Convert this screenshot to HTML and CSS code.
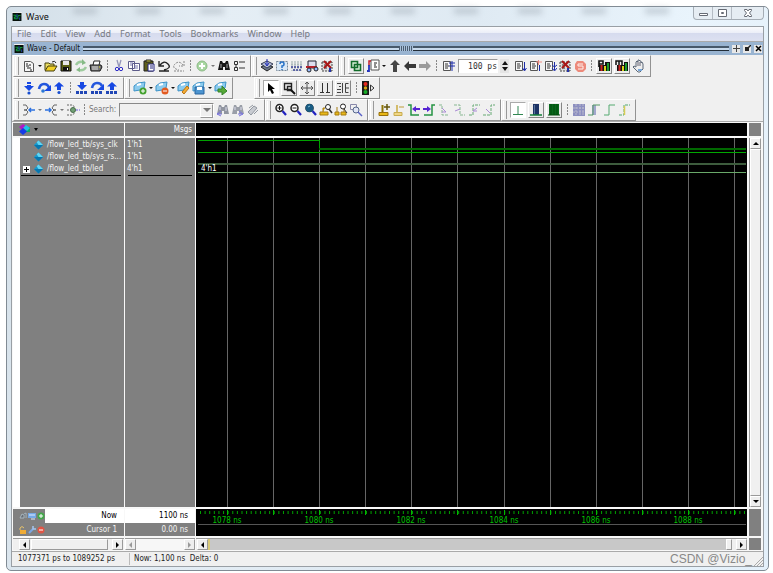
FILE: index.html
```html
<!DOCTYPE html>
<html lang="en">
<head>
<meta charset="utf-8">
<title>Wave</title>
<link rel="stylesheet" href="styles.css">
</head>
<body>
<svg class="defs" aria-hidden="true">
  <defs>
    <g id="page" fill="none" stroke="#555"><path d="M2.5 2.5h7v9h-7z" fill="#f6f6f6"/><path d="M4 5h3M4 7h4M4 9h3" stroke="#333"/></g>
    <g id="flag"><path d="M1 5l4-3 7-1-1 6-4 2-6 1z" fill="#8ccbee" stroke="#3d93c8"/><path d="M4 4l4-1" stroke="#fff" stroke-width="2"/></g>
    <g id="lens"><circle cx="5.5" cy="5" r="3.5" fill="#fff" stroke="#222" stroke-width="1.5"/><path d="M8.5 8l3.5 4" stroke="#2222c0" stroke-width="2.2"/></g>
    <g id="bars"><path d="M2 3h11v9H2z" fill="#111"/><path d="M4.500 6v6" stroke="#c22" stroke-width="2"/><path d="M8 7v5" stroke="#ddd21a" stroke-width="2"/><path d="M11 4v8" stroke="#1b9a2e" stroke-width="2"/></g>
    <g id="binoc"><path d="M3 2h2l1 2h2l1-2h2l2 9H8V8H6v3H1z" fill="currentColor"/></g>
    <symbol id="wave" viewBox="0 0 10 9"><path d="M0 0h10v9H0z" fill="#061009"/><path d="M1 2.5h3v2H2v2h3M6 7V3h3" fill="none" stroke="#12b84c"/><path d="M5 1v5M8 5v3" stroke="#2940b5"/></symbol>
    <symbol id="new" viewBox="0 0 14 14"><path d="M2.500 2.500h6l3 2v8h-9z" fill="#f6f6f6" stroke="#555"/><path d="M4 5h2M4 7h3M5 9h4M7 6h2M8 11h2" stroke="#222"/></symbol>
    <symbol id="open" viewBox="0 0 14 14"><path d="M1 11V4h4l1 1h4v2" fill="#e9dc62" stroke="#444011"/><path d="M1 12l3-5h9l-3 5z" fill="#f0cf25" stroke="#443e10"/><path d="M8 3q3-2 4 1" fill="none" stroke="#222"/></symbol>
    <symbol id="save" viewBox="0 0 14 14"><path d="M2 2h10v10H2z" fill="#5c6015" stroke="#111"/><path d="M4 2h6v4H4z" fill="#e8e8e8"/><path d="M4 8h6v4H4z" fill="#111"/><path d="M8 9h1v2H8z" fill="#fff"/></symbol>
    <symbol id="refresh" viewBox="0 0 14 14"><path d="M2 6q2-4 7-3M12 8q-2 4-7 3" fill="none" stroke="#9ecb9e" stroke-width="2.4"/><path d="M8 0l4 4-4 2zM6 8l-4 3 4 2z" fill="#86ba86"/></symbol>
    <symbol id="print" viewBox="0 0 14 14"><path d="M4 6l1-4h6l-1 4" fill="#fff" stroke="#222"/><path d="M1 6h11l1 2-2 4H2z" fill="#777" stroke="#181818"/><path d="M3 8h6M3 10h6" stroke="#ddd"/><path d="M10 8h1" stroke="#dddb20"/></symbol>
    <symbol id="cut" viewBox="0 0 14 14"><path d="M5 1l2 7M9 1L7 8" stroke="#9496b9" stroke-width="1.3"/><circle cx="5" cy="10" r="1.7" fill="none" stroke="#302ec7"/><circle cx="9" cy="10" r="1.7" fill="none" stroke="#302ec7"/></symbol>
    <symbol id="copy" viewBox="0 0 14 14"><path d="M1.5 2.5h6v7h-6zM5.5 4.5h7v7h-7z" fill="#fff" stroke="#5d5c8a"/><path d="M3 4h3M3 6h2M7 7h4M7 9h4" stroke="#77a"/></symbol>
    <symbol id="paste" viewBox="0 0 14 14"><path d="M2 2h9v10H2z" fill="#60601a" stroke="#222"/><path d="M4 1h5v2H4z" fill="#d6d044" stroke="#222"/><path d="M6 5h6v7H6z" fill="#fff" stroke="#22227c"/><path d="M8 7h3M8 9h3" stroke="#22227c"/></symbol>
    <symbol id="undo" viewBox="0 0 14 14"><path d="M2 2v5h5M3 6q4-5 8-1t-4 6M2 12h10" fill="none" stroke="#222" stroke-width="1.3"/></symbol>
    <symbol id="redo" viewBox="0 0 14 14"><path d="M12 2v5H7M11 6Q7 1 3 5t4 6M2 12h10" fill="none" stroke="#888" stroke-dasharray="2 1"/></symbol>
    <symbol id="add" viewBox="0 0 14 14"><circle cx="7" cy="7" r="5" fill="#a8d7a1" stroke="#8cba86"/><path d="M7 4v6M4 7h6" stroke="#fff" stroke-width="2"/></symbol>
    <symbol id="find" viewBox="0 0 14 14"><g color="#171717"><use href="#binoc"/></g><path d="M4 5v4M10 5v4" stroke="#aaa"/></symbol>
    <symbol id="find2" viewBox="0 0 14 14"><g color="#9095a0"><use href="#binoc"/></g><path d="M4 4v3M10 4v4" stroke="#dde"/><path d="M5 8l-4 3 4 2M1 11h5" fill="none" stroke="#7b75de"/></symbol>
    <symbol id="find3" viewBox="0 0 14 14"><g color="#9a9fa8"><use href="#binoc"/></g><path d="M4 4v3M10 4v3" stroke="#dde"/><path d="M8 8l4 3-4 2M12 11H7" fill="none" stroke="#7b75de"/></symbol>
    <symbol id="clip" viewBox="0 0 14 14"><path d="M2 9l6-6 3 2-6 7zM3 5l4-3M8 11l4-4" fill="#c8cbd1" stroke="#9197a0"/></symbol>
    <symbol id="tree" viewBox="0 0 14 14"><path d="M2.5 2.5h3v3h-3zM2.5 8.500h3v3h-3zM7 3h6M7 9h6M4 6v2" fill="none" stroke="#333"/></symbol>
    <symbol id="stack" viewBox="0 0 14 14"><path d="M1 8l6-3 6 3-6 4z" fill="#6e7888" stroke="#222"/><path d="M1 5l6-3 6 3-6 4z" fill="#bcc4d8" stroke="#333b55"/><path d="M7 0v6M5 4l2 3 2-3" stroke="#1d28b3" fill="none"/></symbol>
    <symbol id="help" viewBox="0 0 14 14"><path d="M1.500 2.500h11v9h-11z" fill="#d9e8f6" stroke="#789" stroke-dasharray="2 1"/><path d="M5 5q0-2 2-2t2 2-2 2v2M7 10v1" fill="none" stroke="#2873c7" stroke-width="1.5"/></symbol>
    <symbol id="gridi" viewBox="0 0 14 14"><path d="M2 2v10M5 2v10M8 2v10M11 2v10M1 5h12" stroke="#9aa" stroke-dasharray="2 1"/><path d="M1 8h12M3 11h9" stroke="#333d91" stroke-dasharray="2 1" stroke-width="1.500"/></symbol>
    <symbol id="car" viewBox="0 0 14 14"><path d="M3 2h8v7H3z" fill="#dde" stroke="#223"/><path d="M1 8h11" stroke="#b4202b" stroke-width="2"/><circle cx="4" cy="11" r="2" fill="#9bf" stroke="#222"/><circle cx="11" cy="10" r="2" fill="#9bf" stroke="#222"/></symbol>
    <symbol id="stopx" viewBox="0 0 14 14"><path d="M2 3h10v9H2z" fill="#ddd" stroke="#444" stroke-dasharray="2 1"/><path d="M4 6h3M4 9h3" stroke="#333"/><path d="M4 2l7 7M11 2L4 9" stroke="#a91616" stroke-width="2"/><path d="M10 9v4" stroke="#2634a9" stroke-width="2"/></symbol>
    <symbol id="restart" viewBox="0 0 14 14"><path d="M2.500 2.500h6v6h-6zM5.500 5.500h6v6h-6z" fill="#d8f0d8" stroke="#126c2a" stroke-width="1.6"/></symbol>
    <symbol id="context" viewBox="0 0 14 14"><path d="M5 1h8v10H5z" fill="#fff" stroke="#555"/><path d="M8 4h3M8 6h2M8 8h3" stroke="#222"/><path d="M5 2H3v5" fill="none" stroke="#c3202c" stroke-width="1.5"/><path d="M1 12h2V6" fill="none" stroke="#2434bd" stroke-width="1.8"/></symbol>
    <symbol id="up" viewBox="0 0 14 14"><path d="M7 1l5 5H9v7H5V6H2z" fill="#454545"/></symbol>
    <symbol id="left" viewBox="0 0 14 14"><path d="M1 7l5-5v3h7v4H6v3z" fill="#383838"/></symbol>
    <symbol id="right" viewBox="0 0 14 14"><path d="M13 7L8 2v3H1v4h7v3z" fill="#9a9a9a"/></symbol>
    <symbol id="runlen" viewBox="0 0 14 14"><use href="#page"/><path d="M11 2v10M8 4h6M8 7h6" stroke="#1e2fa9"/></symbol>
    <symbol id="run" viewBox="0 0 14 14"><use href="#page"/><path d="M11.500 3v8M9.500 9l2 3 2-3" fill="none" stroke="#1e2fa9"/></symbol>
    <symbol id="runc" viewBox="0 0 14 14"><use href="#page"/><path d="M11.500 6v6" stroke="#1e2fa9"/><path d="M10.500 1v5M8 3h6" stroke="#ee8c83"/></symbol>
    <symbol id="runall" viewBox="0 0 14 14"><use href="#page"/><path d="M11.500 3v8M9 6l2.500 2L14 6M9 9l2.500 3L14 9" fill="none" stroke="#1e2fa9"/></symbol>
    <symbol id="break" viewBox="0 0 14 14"><path d="M4 2h6l3 3v5l-3 3H5l-3-3V5z" fill="#ed8a7b"/><path d="M10 5H5v2h5v3H5" fill="none" stroke="#fff0ed"/></symbol>
    <symbol id="perf" viewBox="0 0 14 14"><use href="#bars"/><path d="M1 1h7v5H1z" fill="#eee"/><path d="M2 8V2h4v3H2" fill="none" stroke="#111" stroke-width="1.600"/></symbol>
    <symbol id="mem" viewBox="0 0 14 14"><use href="#bars"/><path d="M0 1h9v5H0z" fill="#eee"/><path d="M1 6V2h6v4M4 2v4" fill="none" stroke="#111" stroke-width="1.500"/></symbol>
    <symbol id="hand" viewBox="0 0 14 14"><path d="M4 8V3l1-1 1 1V1h1l1 1h1v2l1-1 1 2v5l-3 3H6L1 8l1-1z" fill="#eee" stroke="#5c6878"/><path d="M6 3v4M8 3v4" stroke="#667"/><path d="M6 11h4" stroke="#78a8db" stroke-width="2"/></symbol>
    <symbol id="down1" viewBox="0 0 14 14"><path d="M5 1h4v2H5zM5 4h4v1h3l-5 5-5-5h3z" fill="#1748e2"/><circle cx="7" cy="12" r="1.600" fill="#174fd0"/></symbol>
    <symbol id="over" viewBox="0 0 14 14"><path d="M2 8q1-5 5-5 4 0 5 4" fill="none" stroke="#2457dd" stroke-width="2.600"/><path d="M14 4v6H7z" fill="#1748e2"/><circle cx="6" cy="10" r="1.800" fill="#2b78d5"/></symbol>
    <symbol id="up1" viewBox="0 0 14 14"><path d="M7 1l5 4.500H9V9H5V5.500H2z" fill="#1748e2"/><circle cx="7" cy="11.500" r="1.600" fill="#174fd0"/></symbol>
    <symbol id="down2" viewBox="0 0 14 14"><path d="M5 1h4v3h3L7 9 2 4h3z" fill="#1748e2"/><path d="M1 11.500h12" stroke="#2046b5" stroke-width="3" stroke-dasharray="3 1"/></symbol>
    <symbol id="over2" viewBox="0 0 14 14"><path d="M2 7q1-5 5-5 4 0 5 3" fill="none" stroke="#2457dd" stroke-width="2.600"/><path d="M14 3v6H7z" fill="#1748e2"/><path d="M1 11.500h12" stroke="#2046b5" stroke-width="3" stroke-dasharray="3 1"/></symbol>
    <symbol id="up2" viewBox="0 0 14 14"><path d="M7 1l5 4.500H9V9H5V5.500H2z" fill="#1748e2"/><path d="M1 11.500h12" stroke="#2046b5" stroke-width="3" stroke-dasharray="3 1"/></symbol>
    <symbol id="flagadd" viewBox="0 0 14 14"><use href="#flag"/><circle cx="10" cy="10" r="3.500" fill="#43a12e"/><path d="M10 8v4M8 10h4" stroke="#fff"/></symbol>
    <symbol id="flagdel" viewBox="0 0 14 14"><use href="#flag"/><circle cx="10" cy="10" r="3.500" fill="#e35a20"/><path d="M8 10h4" stroke="#fff"/></symbol>
    <symbol id="flagedit" viewBox="0 0 14 14"><use href="#flag"/><path d="M5 11l5-6 2 2-5 6z" fill="#f4ad34" stroke="#ba7414"/></symbol>
    <symbol id="flagsave" viewBox="0 0 14 14"><use href="#flag"/><path d="M3 6h9v7H3z" fill="#4c94d0" stroke="#28659e"/><path d="M5 6h5v3H5z" fill="#fff"/></symbol>
    <symbol id="flaggo" viewBox="0 0 14 14"><use href="#flag"/><path d="M4 8h4V5l5 5-5 4v-3H4z" fill="#57a938" stroke="#34822a"/></symbol>
    <symbol id="pointer" viewBox="0 0 14 14"><path d="M4 2l7 6H8l2 4-2 1-2-4-2 2z" fill="#000"/></symbol>
    <symbol id="zoombox" viewBox="0 0 14 14"><path d="M2.500 2.500h7v6h-7zM5.500 5.500h4v4h-4z" fill="none" stroke="#222" stroke-width="1.400"/><path d="M9 9l4 4" stroke="#111" stroke-width="2"/></symbol>
    <symbol id="pan" viewBox="0 0 14 14"><path d="M7 1v12M1 7h12M5 3l2-2 2 2M5 11l2 2 2-2M3 5L1 7l2 2M11 5l2 2-2 2" fill="none" stroke="#555"/></symbol>
    <symbol id="two" viewBox="0 0 14 14"><path d="M4.500 2v9M9.500 2v9M2 11.500h4M8 11.500h4" stroke="#333"/></symbol>
    <symbol id="edit" viewBox="0 0 14 14"><path d="M1 2.500h4M3 5.500h2M1 8.500h4M1 11.500h4M6.500 2v10M12.500 2.500h-3v9h3M9 7h4" fill="none" stroke="#444"/></symbol>
    <symbol id="light" viewBox="0 0 14 14"><path d="M1 0h7v14H1z" fill="#191919"/><circle cx="4.500" cy="3" r="2" fill="#e52a1e"/><circle cx="4.500" cy="7" r="1.700" fill="#d7a616"/><circle cx="4.500" cy="11" r="2" fill="#16ab26"/><path d="M9.500 4l3.500 3-3.500 3z" fill="none" stroke="#333"/></symbol>
    <symbol id="br1" viewBox="0 0 14 14"><path d="M1 2h3l2 3-2 2H2h2l2 2-2 3H1" fill="none" stroke="#666"/><path d="M13 7H7M9 5L7 7l2 2" fill="none" stroke="#2e72df" stroke-width="1.500"/></symbol>
    <symbol id="br2" viewBox="0 0 14 14"><path d="M13 2h-3L8 5l2 2h2-2L8 9l2 3h3" fill="none" stroke="#666"/><path d="M1 7h6M5 5l2 2-2 2" fill="none" stroke="#2e72df" stroke-width="1.500"/></symbol>
    <symbol id="br3" viewBox="0 0 14 14"><path d="M1 2h5l3 2M1 12h5l3-2M1 7h3" fill="none" stroke="#666" stroke-dasharray="2 1"/><circle cx="7" cy="7" r="2.500" fill="#71a175" stroke="#486b4a"/><path d="M10 7h4" stroke="#6a58df" stroke-dasharray="2 1"/></symbol>
    <symbol id="zin" viewBox="0 0 14 14"><use href="#lens"/><path d="M5.500 3v4M3.500 5h4" stroke="#111"/></symbol>
    <symbol id="zout" viewBox="0 0 14 14"><use href="#lens"/><path d="M3.500 5h4" stroke="#111"/></symbol>
    <symbol id="zfull" viewBox="0 0 14 14"><use href="#lens"/><circle cx="5.500" cy="5" r="4" fill="#185b83"/><path d="M4 4l2-1" stroke="#80c0da"/></symbol>
    <symbol id="zcur" viewBox="0 0 14 14"><path d="M1 9h8v3H1zM4 9V5h2" fill="#e8b818" stroke="#a57a10"/><circle cx="9" cy="4" r="2.500" fill="#fff" stroke="#222"/><path d="M10 6l3 4" stroke="#333" stroke-width="1.500"/></symbol>
    <symbol id="zcur2" viewBox="0 0 14 14"><path d="M1 9h4v3H1zM7 9h5v3H7zM3 9V4M10 9V5" fill="#e8b818" stroke="#a57a10"/><circle cx="9" cy="3.500" r="2.500" fill="#fff" stroke="#222"/><path d="M10 6l3 4" stroke="#333"/></symbol>
    <symbol id="zlast" viewBox="0 0 14 14"><path d="M1.500 1.500h6v5h-6z" fill="none" stroke="#88a"/><circle cx="7" cy="7" r="3" fill="#dfe4f4" stroke="#568"/><path d="M9 9l4 4" stroke="#5961c8" stroke-width="1.500"/></symbol>
    <symbol id="curadd" viewBox="0 0 14 14"><path d="M5.500 2v8" stroke="#8e7508" stroke-width="2"/><path d="M2 9.500h9v3H2z" fill="#e8b818" stroke="#97700c"/><path d="M7 4h6M10 1v6" stroke="#65570b" stroke-width="1.500"/></symbol>
    <symbol id="curdel" viewBox="0 0 14 14"><path d="M5 2v8" stroke="#d3bc6c" stroke-width="2"/><path d="M2 9.500h8v3H2z" fill="#f0d684" stroke="#c8ac50"/><path d="M7 4h5" stroke="#bd9c39"/></symbol>
    <symbol id="prev" viewBox="0 0 14 14"><path d="M1 2h3v10h8" fill="none" stroke="#259343" stroke-width="1.500"/><path d="M13 6H7" stroke="#5422d2" stroke-width="2"/><path d="M9 3v6L5 6z" fill="#5422d2"/></symbol>
    <symbol id="next" viewBox="0 0 14 14"><path d="M13 2h-3v10H2" fill="none" stroke="#259343" stroke-width="1.500"/><path d="M1 6h5" stroke="#5422d2" stroke-width="2"/><path d="M5 3v6l4-3z" fill="#5422d2"/></symbol>
    <symbol id="edge1" viewBox="0 0 14 14"><path d="M2 2h3v10h7" fill="none" stroke="#87b791" stroke-dasharray="3 1"/><path d="M5 5l4 4M5 9h4" stroke="#aa8bd5"/></symbol>
    <symbol id="edge2" viewBox="0 0 14 14"><path d="M2 2h6v10h5" fill="none" stroke="#87b791" stroke-dasharray="3 1"/><path d="M3 8l5-2" stroke="#aa8bd5"/></symbol>
    <symbol id="edge3" viewBox="0 0 14 14"><path d="M2 12h4V2h7" fill="none" stroke="#66a975" stroke-dasharray="3 1"/><path d="M10 5L6 8h4" fill="none" stroke="#aa8bd5"/></symbol>
    <symbol id="edge4" viewBox="0 0 14 14"><path d="M1 12h8V2h4" fill="none" stroke="#66a975" stroke-dasharray="3 1"/><path d="M4 6l4 4" stroke="#aa8bd5"/></symbol>
    <symbol id="m1" viewBox="0 0 14 14"><path d="M2 11.500h10M7 3v8" stroke="#318752"/></symbol>
    <symbol id="m2" viewBox="0 0 14 14"><path d="M4 1h6v11H4z" fill="#1c3365"/><path d="M5.500 2v9" stroke="#57739b"/><path d="M1 12h12" stroke="#13813a" stroke-width="1.500"/></symbol>
    <symbol id="m3" viewBox="0 0 14 14"><path d="M2 1h10v11H2z" fill="#08681c"/><path d="M4 1v11M7 1v11M10 1v11M1 12h12" stroke="#034a0c"/></symbol>
    <symbol id="m4" viewBox="0 0 14 14"><path d="M1 1h12v12H1z" fill="#8c8fc0"/><path d="M4 1v12M8 1v12M11 1v12M1 5h12M1 9h12" stroke="#b9b9cd" stroke-dasharray="2 1"/></symbol>
    <symbol id="m5" viewBox="0 0 14 14"><path d="M5 2h4v10H5z" fill="#a2a6cd"/><path d="M1 12h5V2h7" fill="none" stroke="#559965"/></symbol>
    <symbol id="m6" viewBox="0 0 14 14"><path d="M2 12h5V2h6" fill="none" stroke="#55aa70"/></symbol>
    <symbol id="m7" viewBox="0 0 14 14"><path d="M2 12h5V2h6" fill="none" stroke="#55aa70" stroke-dasharray="3 1"/><path d="M7.500 3v9" stroke="#d8cc54" stroke-width="1.500"/></symbol>
    <symbol id="gem" viewBox="0 0 10 10"><path d="M5 0l5 5-5 5-5-5z" fill="#159bd0"/><path d="M5 0l5 5H5L3 2z" fill="#62d5f3"/><path d="M0 5h5l5 0-5 5z" fill="#0876af"/></symbol>
    <symbol id="gems" viewBox="0 0 12 11"><path d="M4 0l4 3-4 4-4-4z" fill="#b219c4"/><path d="M7 3h4v5H7z" fill="#11ab60"/><path d="M7 1l4 3-3 3-4-3z" fill="#1ac5e8"/><path d="M4 4l4 3.500L4 11 0 7.500z" fill="#163be8"/></symbol>
    <symbol id="plus" viewBox="0 0 8 8"><circle cx="4" cy="4" r="3.500" fill="#43a84a"/><path d="M4 2v4M2 4h4" stroke="#fff"/></symbol>
    <symbol id="minus" viewBox="0 0 8 8"><circle cx="4" cy="4" r="3.500" fill="#e05545"/><path d="M2 4h4" stroke="#fff"/></symbol>
    <symbol id="screen" viewBox="0 0 8 8"><path d="M0 1h8v5H0z" fill="#75a9e6"/><path d="M1 3h6M3 7h4" stroke="#dfeaff"/></symbol>
    <symbol id="cam" viewBox="0 0 8 8"><path d="M1 6l2-4 2 1v3zM5 2l2-1v5" fill="#666d75" stroke="#a7b5bd"/></symbol>
    <symbol id="lock" viewBox="0 0 8 8"><path d="M1 4V2q2-3 4 0" fill="none" stroke="#e8c36a"/><path d="M1 4h6v4H1z" fill="#efab35"/></symbol>
    <symbol id="wrench" viewBox="0 0 8 8"><path d="M1 7l4-4" stroke="#7ba7e4" stroke-width="2"/><path d="M5 0v3h3" fill="none" stroke="#a4c5ef" stroke-width="1.500"/></symbol>
  </defs>
</svg>

<main class="window">
  <header class="titlebar">
    <svg class="app-icon"><use href="#wave"/></svg>
    <h1>Wave</h1>
    <div class="haze" aria-hidden="true"><i></i><i></i><i></i><i></i><i></i><i></i><i></i><i></i><i></i><i></i></div>
    <div class="window-buttons">
      <button aria-label="Minimize"><svg viewBox="0 0 12 10"><path d="M2.500 5.500h8v2h-8z" fill="#fff" stroke="#666b74"/></svg></button>
      <button aria-label="Maximize"><svg viewBox="0 0 12 10"><path d="M2.500 1.500h8v7h-8z" fill="#fff" stroke="#666b74"/><path d="M5.500 4.500h2v1h-2z" fill="none" stroke="#666b74"/></svg></button>
      <button class="wide" aria-label="Close"><svg viewBox="0 0 12 10"><path d="M2.500 1.500h2.500l1 1.500 1-1.500h2.500v1L7.500 5l2 2.500v1H7L6 7 5 8.500H2.500v-1l2-2.500-2-2.500z" fill="#fff" stroke="#666b74"/></svg></button>
    </div>
  </header>

  <div class="client">
    <nav class="menu">
      <a href="#">File</a><a href="#">Edit</a><a href="#">View</a><a href="#">Add</a><a href="#">Format</a><a href="#">Tools</a><a href="#">Bookmarks</a><a href="#">Window</a><a href="#">Help</a>
    </nav>

    <div class="pane-title">
      <svg class="app-icon"><use href="#wave"/></svg>
      <h2>Wave - Default</h2>
      <span class="grip"><span class="dots"></span></span>
      <button aria-label="Add pane"><svg viewBox="0 0 7 7"><path d="M3.500 0v7M0 3.500h7" stroke="#444"/></svg></button>
      <button aria-label="Undock"><svg viewBox="0 0 7 7"><path d="M1 2h4v4H1z" fill="#222"/><path d="M3 4l4-4" stroke="#222" stroke-width="1.500"/></svg></button>
      <button aria-label="Close pane"><svg viewBox="0 0 7 7"><path d="M1 1l5 5M6 1L1 6" stroke="#000" stroke-width="1.500"/></svg></button>
    </div>

    <div class="toolbars">
      <div class="bar-row">
        <div class="bar">
          <button aria-label="New"><svg><use href="#new"/></svg></button><button class="drop" aria-label="New options"></button>
          <button aria-label="Open"><svg><use href="#open"/></svg></button><button aria-label="Save"><svg><use href="#save"/></svg></button><button aria-label="Reload"><svg><use href="#refresh"/></svg></button><button aria-label="Print"><svg><use href="#print"/></svg></button><span class="sep"></span>
          <button aria-label="Cut"><svg><use href="#cut"/></svg></button><button aria-label="Copy"><svg><use href="#copy"/></svg></button><button aria-label="Paste"><svg><use href="#paste"/></svg></button><button aria-label="Undo"><svg><use href="#undo"/></svg></button><button aria-label="Redo"><svg><use href="#redo"/></svg></button><span class="sep"></span>
          <button aria-label="Add"><svg><use href="#add"/></svg></button><button class="drop dim" aria-label="Add options"></button><button aria-label="Find"><svg><use href="#find"/></svg></button><button aria-label="Collapse"><svg><use href="#tree"/></svg></button>
        </div>
        <div class="bar">
          <button aria-label="Compile"><svg><use href="#stack"/></svg></button><button aria-label="Help"><svg><use href="#help"/></svg></button><button aria-label="Compile all"><svg><use href="#gridi"/></svg></button><button aria-label="Simulate"><svg><use href="#car"/></svg></button><button aria-label="End"><svg><use href="#stopx"/></svg></button>
        </div>
        <div class="bar">
          <button class="raised" aria-label="Restart"><svg><use href="#restart"/></svg></button><button aria-label="Context"><svg><use href="#context"/></svg></button><button class="drop" aria-label="Context options"></button>
          <button aria-label="Up"><svg><use href="#up"/></svg></button><button aria-label="Back"><svg><use href="#left"/></svg></button><button aria-label="Forward"><svg><use href="#right"/></svg></button><span class="sep"></span><button aria-label="Run length"><svg><use href="#runlen"/></svg></button>
          <input class="length" type="text" value="100 ps" aria-label="Run length">
          <button class="spinner" aria-label="Change length"><i></i><i></i></button>
          <button aria-label="Run"><svg><use href="#run"/></svg></button><button aria-label="Continue"><svg><use href="#runc"/></svg></button><button aria-label="Run all"><svg><use href="#runall"/></svg></button><button aria-label="Stop"><svg><use href="#stopx"/></svg></button><button aria-label="Break"><svg><use href="#break"/></svg></button><span class="sep"></span>
          <button class="raised" aria-label="Profile"><svg><use href="#perf"/></svg></button><button class="raised" aria-label="Memory"><svg><use href="#mem"/></svg></button><button aria-label="Hand"><svg><use href="#hand"/></svg></button>
        </div>
      </div>
      <div class="bar-row">
        <div class="bar">
          <button aria-label="Step into"><svg><use href="#down1"/></svg></button><button aria-label="Step over"><svg><use href="#over"/></svg></button><button aria-label="Step out"><svg><use href="#up1"/></svg></button><span class="sep"></span><button aria-label="Step into current"><svg><use href="#down2"/></svg></button><button aria-label="Step over current"><svg><use href="#over2"/></svg></button><button aria-label="Step out current"><svg><use href="#up2"/></svg></button>
        </div>
        <div class="bar">
          <button aria-label="Add bookmark"><svg><use href="#flagadd"/></svg></button><button class="drop" aria-label="Add options"></button><button aria-label="Delete bookmark"><svg><use href="#flagdel"/></svg></button><button class="drop" aria-label="Delete options"></button><button aria-label="Edit bookmark"><svg><use href="#flagedit"/></svg></button><button aria-label="Save bookmark"><svg><use href="#flagsave"/></svg></button><button class="drop" aria-label="Save options"></button><button aria-label="Go to bookmark"><svg><use href="#flaggo"/></svg></button>
        </div>
        <div class="bar apart">
          <button class="raised pressed" aria-label="Select"><svg><use href="#pointer"/></svg></button><button class="raised" aria-label="Zoom mode"><svg><use href="#zoombox"/></svg></button><button class="raised" aria-label="Pan mode"><svg><use href="#pan"/></svg></button><button class="raised" aria-label="Two cursors"><svg><use href="#two"/></svg></button><button class="raised" aria-label="Edit mode"><svg><use href="#edit"/></svg></button><span class="sep"></span><button aria-label="Stop drawing"><svg><use href="#light"/></svg></button>
        </div>
      </div>
      <div class="bar-row">
        <div class="bar">
          <button aria-label="Previous driver"><svg><use href="#br1"/></svg></button><button class="drop dim" aria-label="Driver options"></button><button aria-label="Next reader"><svg><use href="#br2"/></svg></button><button class="drop dim" aria-label="Reader options"></button><button aria-label="Trace"><svg><use href="#br3"/></svg></button><span class="sep"></span>
          <label for="search">Search:</label>
          <span class="combo"><select id="search"><option></option></select></span>
          <button aria-label="Search back"><svg><use href="#find2"/></svg></button><button aria-label="Search forward"><svg><use href="#find3"/></svg></button><button aria-label="Search options"><svg><use href="#clip"/></svg></button>
        </div>
        <div class="bar">
          <button aria-label="Zoom in"><svg><use href="#zin"/></svg></button><button aria-label="Zoom out"><svg><use href="#zout"/></svg></button><button aria-label="Zoom full"><svg><use href="#zfull"/></svg></button><button aria-label="Zoom on cursor"><svg><use href="#zcur"/></svg></button><button aria-label="Zoom between cursors"><svg><use href="#zcur2"/></svg></button><button aria-label="Zoom last"><svg><use href="#zlast"/></svg></button>
        </div>
        <div class="bar">
          <button aria-label="Insert cursor"><svg><use href="#curadd"/></svg></button><button aria-label="Delete cursor"><svg><use href="#curdel"/></svg></button><button aria-label="Previous transition"><svg><use href="#prev"/></svg></button><button aria-label="Next transition"><svg><use href="#next"/></svg></button><button aria-label="Previous falling edge"><svg><use href="#edge1"/></svg></button><button aria-label="Next falling edge"><svg><use href="#edge2"/></svg></button><button aria-label="Previous rising edge"><svg><use href="#edge3"/></svg></button><button aria-label="Next rising edge"><svg><use href="#edge4"/></svg></button>
        </div>
        <div class="bar">
          <button class="raised pressed" aria-label="Mode 1"><svg><use href="#m1"/></svg></button><button class="raised" aria-label="Mode 2"><svg><use href="#m2"/></svg></button><button class="raised" aria-label="Mode 3"><svg><use href="#m3"/></svg></button><span class="sep"></span><button aria-label="Mode 4"><svg><use href="#m4"/></svg></button><button aria-label="Mode 5"><svg><use href="#m5"/></svg></button><button aria-label="Mode 6"><svg><use href="#m6"/></svg></button><button aria-label="Mode 7"><svg><use href="#m7"/></svg></button>
        </div>
      </div>
    </div>

    <section class="viewer">
      <div class="head"><svg class="gems"><use href="#gems"/></svg><span class="caret"></span></div>
      <div class="head msgs">Msgs</div>
      <div class="black"></div>
      <div class="gray"></div>

      <ul class="names">
        <li><svg><use href="#gem"/></svg>/flow_led_tb/sys_clk</li>
        <li><svg><use href="#gem"/></svg>/flow_led_tb/sys_rs...</li>
        <li class="bus"><button class="expand" aria-label="Expand"></button><svg><use href="#gem"/></svg>/flow_led_tb/led</li>
      </ul>
      <ul class="values"><li>1'h1</li><li>1'h1</li><li>4'h1</li></ul>
      <div class="black canvas">
        <svg class="plot" shape-rendering="crispEdges">
          <path d="M31.500 0v2000M77.500 0v2000M123.500 0v2000M169.500 0v2000M215.500 0v2000M261.500 0v2000M308.500 0v2000M354.500 0v2000M400.500 0v2000M446.500 0v2000M492.500 0v2000M538.500 0v2000" stroke="#666"/>
          <path d="M2 2.500h121.500V11" fill="none" stroke="#00a000"/>
          <path d="M123 11h427" stroke="#006800" stroke-width="2"/>
          <path d="M2 14.500h548" stroke="#00a800"/>
          <path d="M2 26h548" stroke="#3d5c3d" stroke-width="2"/>
          <path d="M2 34.500h548" stroke="#69a969"/>
          <text x="5" y="33">4'h1</text>
        </svg>
      </div>
      <div class="scroll vertical"><button class="arrow n" aria-label="Scroll up"></button><span class="thumb"></span><button class="arrow s" aria-label="Scroll down"></button></div>

      <div class="foot-names">
        <div class="now"><span class="tools"><svg><use href="#cam"/></svg><svg><use href="#screen"/></svg><svg><use href="#plus"/></svg></span><span>Now</span></div>
        <div class="cursor"><span class="tools"><svg><use href="#lock"/></svg><svg><use href="#wrench"/></svg><svg><use href="#minus"/></svg></span><span>Cursor 1</span></div>
      </div>
      <div class="foot-values"><div class="now">1100 ns</div><div class="cursor">0.00 ns</div></div>
      <div class="black ruler">
        <svg class="plot">
          <path d="M4 3.500h546" stroke="#00a000" stroke-width="3" stroke-dasharray="1 3.610"/>
          <path d="M31.500 1v5M77.500 1v5M123.500 1v5M169.500 1v5M215.500 1v5M261.500 1v5M308.500 1v5M354.500 1v5M400.500 1v5M446.500 1v5M492.500 1v5M538.500 1v5" stroke="#00b800"/>
          <path d="M2 15.500h548" stroke="#555"/>
          <g text-anchor="middle"><text x="31" y="14">1078 ns</text><text x="123" y="14">1080 ns</text><text x="215" y="14">1082 ns</text><text x="308" y="14">1084 ns</text><text x="400" y="14">1086 ns</text><text x="492" y="14">1088 ns</text></g>
        </svg>
      </div>
      <div class="gray"></div>

      <div class="scroll inset"><button class="arrow w" aria-label="Scroll left"></button><span class="thumb"></span><button class="arrow e" aria-label="Scroll right"></button></div>
      <div class="scroll off"><button class="arrow w" aria-label="Scroll left"></button><span class="track"></span><button class="arrow e" aria-label="Scroll right"></button></div>
      <div class="scroll time"><button class="arrow w" aria-label="Scroll left"></button><span class="track"></span><span class="thumb small"></span><button class="arrow e" aria-label="Scroll right"></button></div>
      <div class="gray"></div>
    </section>

    <footer class="status">
      <span class="range">1077371 ps to 1089252 ps</span>
      <span class="delta">Now: 1,100 ns&nbsp; Delta: 0</span>
      <span class="mark">CSDN @Vizio_</span>
      <svg class="resize" viewBox="0 0 10 10"><path d="M1 10l9-9M4 10l6-6M7 10l3-3" stroke="#aaa"/></svg>
    </footer>
  </div>
</main>
</body>
</html>
```
FILE: styles.css
```css
* { box-sizing: border-box; }

body {
  margin: 0;
  padding: 6px 4px 2px 6px;
  height: 100vh;
  background: #fff;
  font: 8px/12px "DejaVu Sans Condensed", "Noto Sans", sans-serif;
  color: #222;
}

.defs { position: absolute; width: 0; height: 0; }
button { margin: 0; padding: 0; border: 0; background: none; font: inherit; color: inherit; }
h1, h2, ul { margin: 0; padding: 0; font-weight: 400; list-style: none; }

/* Window frame */
.window {
  display: flex;
  flex-direction: column;
  height: 100%;
  padding: 0 4px 3px;
  border: 1px solid #818b94;
  border-radius: 5px;
  background: linear-gradient(100deg, #d3dfe8 0, #e5eef5 25%, #dfeaf3 55%, #e9f4fc 80%, #e4f0fa 100%);
}

.titlebar { display: flex; align-items: center; gap: 4px; height: 19px; flex: none; }
.titlebar h1 { font: 9px/14px "Noto Sans", "Open Sans", sans-serif; color: #111; }
.app-icon { width: 10px; height: 9px; border-top: 1px solid #eee; flex: none; }
.titlebar .app-icon { margin-left: 1px; }
.haze { display: flex; flex: 1; justify-content: space-around; align-items: flex-start; height: 18px; }
.haze i { width: 24px; height: 6px; background: #9ba6b0; opacity: .5; filter: blur(3px); }

.window-buttons {
  display: flex;
  align-self: flex-start;
  height: 13px;
  border: 1px solid #a5adb5;
  border-top: 0;
  border-radius: 0 0 4px 4px;
  background: #e6edf3;
}
.window-buttons button { display: flex; align-items: center; justify-content: center; width: 19px; border-right: 1px solid #b5bcc4; }
.window-buttons .wide { width: 31px; border-right: 0; }
.window-buttons svg { width: 12px; height: 10px; }

.client {
  display: flex;
  flex: 1;
  flex-direction: column;
  min-height: 0;
  border: 1px solid #999fa5;
  background: #f0f0f0;
}

.menu {
  display: flex;
  gap: 9px;
  height: 14px;
  padding-left: 5px;
  flex: none;
  font: 9px/14px "Noto Sans", "Open Sans", sans-serif;
  background: linear-gradient(#fafbfd 0, #eceff8 40%, #d6dbee 45%, #dde1f1 100%);
}
.menu a { color: #767a82; text-decoration: none; }

.pane-title { display: flex; align-items: center; gap: 3px; height: 14px; padding: 0 1px 0 2px; flex: none; border-top: 1px solid #aaa; background: #99b4d1; }
.pane-title h2 { font-size: 8px; color: #111; }
.grip { display: flex; flex: 1; justify-content: center; height: 5px; border-top: 2px solid #47596b; border-bottom: 1px solid #222d38; background: #c8daec; }
.dots { width: 14px; height: 5px; margin-top: -2px; background: repeating-linear-gradient(90deg, #4b5c70 0 1px, #a9c2dc 1px 2px); }
.pane-title button { display: flex; width: 8px; height: 8px; background: #e8e8e8; justify-content: center; align-items: center; }
.pane-title button svg { width: 7px; height: 7px; }

/* Toolbars */
.toolbars { flex: none; padding-left: 1px; background: #f0f0f0; }
.bar-row { display: flex; height: 22px; }
.bar {
  position: relative;
  display: flex;
  align-items: center;
  height: 22px;
  padding: 0 4px 1px 7px;
  border: 1px solid #fff;
  border-right-color: #929292;
  border-bottom-color: #929292;
}
.bar::before { content: ""; position: absolute; left: 1px; top: 1px; bottom: 1px; width: 2px; border-left: 1px solid #fff; border-right: 1px solid #999; }
.apart { margin-left: 21px; }
.bar button { display: flex; align-items: center; justify-content: center; width: 15px; height: 15px; flex: none; }
.bar button svg { width: 14px; height: 14px; flex: none; }
.bar .drop { width: 7px; }
.drop::before, .caret { content: ""; border: 2px solid transparent; border-top-color: #111; border-bottom: 0; }
.drop.dim::before { border-top-color: #777; }
.bar .raised { width: 16px; height: 16px; margin: 0 1px; border: 1px solid; border-color: #fff #858585 #858585 #fff; background: #ececec; }
.bar .pressed { border-color: #aaa #fff #fff #aaa; background: #fff; }
.sep { width: 8px; height: 12px; flex: none; background: repeating-linear-gradient(#888 0 2px, #f0f0f0 2px 3px) center / 1px 12px no-repeat; }
.length { width: 40px; height: 14px; margin: 0 2px 0 3px; padding: 1px 0 0; border: 1px solid #bbb; border-color: #999 #fff #fff #999; background: #fff; font: 8px "DejaVu Sans Mono", monospace; text-align: right; color: #333; }
.bar .spinner { flex-direction: column; gap: 2px; width: 9px; height: 14px; margin-right: 3px; background: #e4e4e4; }
.spinner i { border: 3px solid transparent; border-top: 0; border-bottom: 4px solid #111; }
.spinner i + i { border-bottom: 0; border-top: 4px solid #111; }
.bar label { width: 30px; padding-left: 1px; flex: none; color: #777; }
.combo { position: relative; display: flex; width: 95px; margin: 0 1px; }
.combo select { width: 100%; height: 14px; appearance: none; border: 1px solid; border-color: #888 #fff #fff #888; border-radius: 0; background: #efefef; }
.combo::before { content: ""; position: absolute; right: 1px; top: 1px; width: 11px; height: 12px; border: 1px solid; border-color: #fff #999 #999 #fff; pointer-events: none; }
.combo::after { content: ""; position: absolute; right: 3px; top: 5px; border: 4px solid transparent; border-top-color: #777; border-bottom: 0; pointer-events: none; }

/* Signal viewer */
.viewer {
  display: grid;
  flex: 1;
  min-height: 0;
  grid-template-columns: 111px 70px minmax(0, 1fr) 12px;
  grid-template-rows: 13px minmax(0, 1fr) 27px 12px;
  gap: 2px 1px;
  padding: 1px 2px 1px 1px;
  border-top: 1px solid #aaa;
  background: #f8f8f8;
}
.head { display: flex; align-items: center; gap: 3px; background: #808080; color: #fff; }
.gems { width: 12px; height: 11px; margin-left: 6px; }
.caret { border-width: 3px 2px 0; border-color: #000 transparent; }
.msgs { justify-content: flex-end; padding-right: 3px; }
.black { background: #000; margin-right: 1px; overflow: hidden; }
.gray { background: #808080; }
.names, .values { padding-top: 1px; background: #808080; color: #f4f4f4; }
.names { border-left: 7px solid #fff; }
.names li, .values li { display: flex; align-items: center; height: 12px; white-space: nowrap; }
.names li { gap: 4px; padding-left: 14px; }
.names li svg { width: 9px; height: 10px; flex: none; }
.names .bus { padding-left: 3px; }
.expand { width: 7px; height: 7px; background: linear-gradient(#000, #000) center / 5px 1px no-repeat, linear-gradient(#000, #000) center / 1px 5px no-repeat, #fff; }
.names::after, .values::after { content: ""; display: block; height: 1px; margin: 0 3px 0 1px; background: #000; }
.values { padding-left: 2px; }
.plot { display: block; width: 100%; height: 100%; font-size: 8px; }
.canvas text { fill: #fff; }
.ruler text { fill: #00c400; }

.foot-names, .foot-values { display: flex; flex-direction: column; background: #808080; }
.now, .cursor { display: flex; align-items: center; justify-content: flex-end; height: 14px; padding-right: 7px; }
.now { background: #fff; color: #000; }
.cursor { height: 13px; color: #f4f4f4; }
.tools { display: flex; gap: 1px; align-self: stretch; align-items: center; width: 32px; margin-right: auto; padding-left: 6px; background: #808080; }
.tools svg { width: 8px; height: 8px; }

.scroll { display: flex; border: 1px solid #999; border-width: 1px 0 0; background: #f0f0f0; min-width: 0; }
.vertical { flex-direction: column; border-width: 0 0 0 1px; }
.arrow { display: flex; align-items: center; justify-content: center; width: 11px; height: 11px; flex: none; border: 1px solid; border-color: #fff #999 #999 #fff; background: #eee; }
.arrow::before { content: ""; border: 3px solid transparent; }
.n::before { border-top: 0; border-bottom-color: #000; }
.s::before { border-bottom: 0; border-top-color: #000; }
.w::before { border-left: 0; border-right-color: #000; }
.e::before { border-right: 0; border-left-color: #000; }
.off .w::before { border-right-color: #999; }
.off .e::before { border-left-color: #999; }
.thumb { flex: 1; border: 1px solid; border-color: #fff #999 #999 #fff; background: #f0f0f0; }
.inset { padding: 0 1px 0 6px; }
.inset .thumb { margin: 0 4px 0 1px; }
.track { flex: 1; background: #f7f7f7; }
.time .track { border-left: 2px solid #d9c978; background: #c8c8c8; }
.time { margin-right: 1px; padding-left: 1px; }
.time .small { flex: none; width: 6px; margin-right: 4px; }

.status { display: flex; align-items: center; height: 15px; flex: none; border-top: 1px solid #aaa; background: #f0f0f0; color: #222; }
.range { width: 118px; padding-left: 6px; border-right: 1px solid #bbb; }
.delta { flex: 1; padding-left: 4px; }
.mark { font: 12px/14px "Liberation Sans", Arial, sans-serif; color: #888; margin-right: 1px; white-space: nowrap; }
.resize { width: 10px; height: 10px; align-self: flex-end; }
```
